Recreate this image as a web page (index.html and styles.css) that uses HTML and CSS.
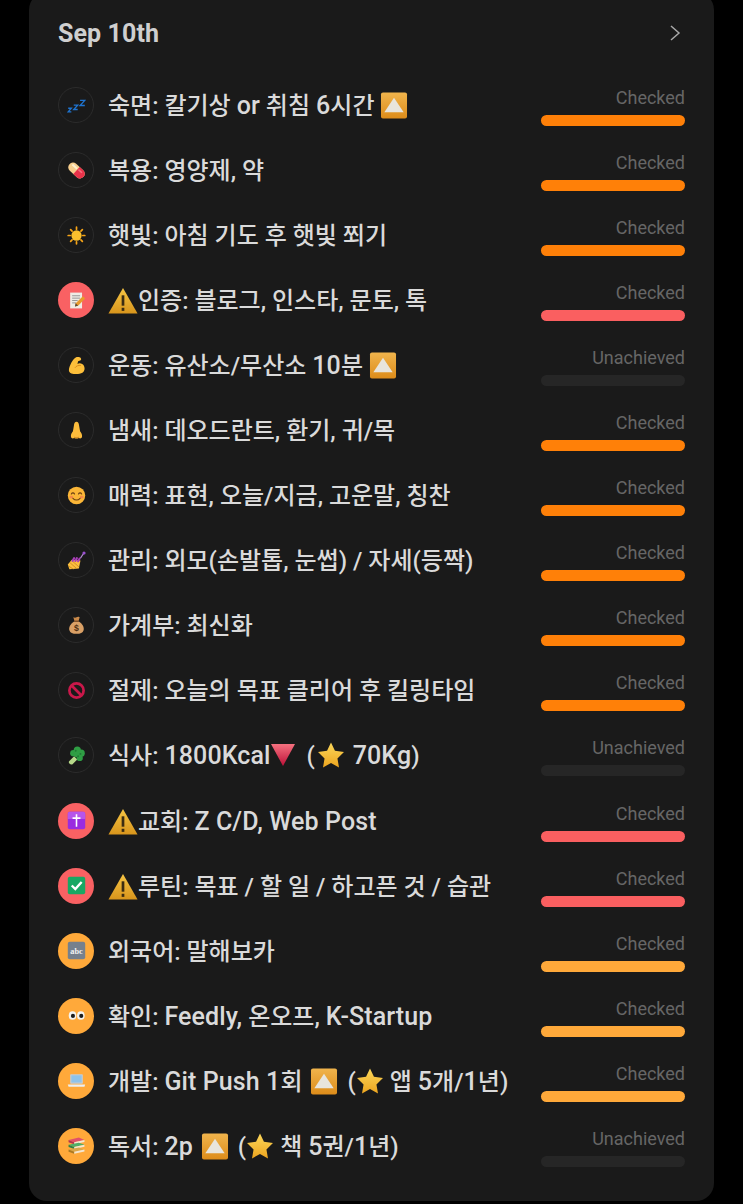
FILE: index.html
```html
<!DOCTYPE html>
<html lang="ko">
<head>
    <meta charset="UTF-8">
    <meta name="viewport" content="width=device-width, initial-scale=1.0">
    <title>Sep 10th</title>
    <link rel="stylesheet" href="styles.css">
</head>
<body>
    <!-- Emoji drawn as symbols, there is no emoji font -->
    <svg class="sprites" xmlns="http://www.w3.org/2000/svg">
        <defs>
            <linearGradient id="g-up" x1="0" y1="0" x2="0" y2="1"><stop offset="0" stop-color="#f0b44c"/><stop offset="1" stop-color="#dd8c1a"/></linearGradient>
            <linearGradient id="g-warn" x1="0" y1="0" x2="0" y2="1"><stop offset="0" stop-color="#f6c544"/><stop offset="1" stop-color="#d8951c"/></linearGradient>
            <linearGradient id="g-down" x1="0" y1="0" x2="0" y2="1"><stop offset="0" stop-color="#f5717f"/><stop offset="1" stop-color="#bd1038"/></linearGradient>
            <linearGradient id="g-star" x1="0" y1="0" x2="0" y2="1"><stop offset="0" stop-color="#fbd75a"/><stop offset="1" stop-color="#eda51f"/></linearGradient>
        </defs>
        <symbol id="e-zzz" viewBox="0 0 24 24"><g fill="none" stroke="#1f74d0" stroke-width="1.700"><path d="M1.500 15.500h4l-4 4.500h4"/><path d="M8.500 11.500h5l-5 5.500h5"/><path d="M16.500 5.500h6l-6 6.500h6"/></g></symbol>
        <symbol id="e-pill" viewBox="0 0 24 24"><g transform="rotate(42 12 12)"><rect x="0" y="6" width="24" height="12" rx="6" fill="#f7cf8e"/><path d="M12 6h6a6 6 0 0 1 0 12H12z" fill="#e8324a"/><path d="M3 8.500h8v2.500H3z" fill="#fff0cf"/><path d="M13 8.500h6v2h-6z" fill="#f4707f"/></g></symbol>
        <symbol id="e-sun" viewBox="0 0 24 24"><g stroke="#f7a417" stroke-width="2.200" stroke-linecap="round"><path d="M12 1.500v2.500M12 20v2.500M1.500 12H4M20 12h2.500M4.600 4.600l1.800 1.800M17.600 17.600l1.800 1.800M4.600 19.400l1.800-1.800M17.600 6.400l1.800-1.800"/></g><circle cx="12" cy="12" r="6.500" fill="#fbc02d"/></symbol>
        <symbol id="e-memo" viewBox="0 0 24 24"><path d="M4 2h15v20H4z" fill="#efece4"/><path d="M6.500 6h10M6.500 9h10M6.500 12h7M6.500 15h5" stroke="#8a8a8a" stroke-width="1.100"/><path d="M10 19.500l1-4 9-9 3 3-9 9z" fill="#e89a2c"/><path d="M10 19.500l1-4 3 3z" fill="#5b4a3a"/></symbol>
        <symbol id="e-muscle" viewBox="0 0 24 24"><path d="M11 2c2-1 5-.8 6.500.8.800 1 .3 2.600-1 3l-2.500.7-.8 3.500C16 8.500 20 9.500 21.500 12.500c1.500 3 .7 7-2 8.700-3.500 2-10 2-14 .8-2.500-.8-3.500-3-3-5.500C3.500 12 6.500 5 11 2z" fill="#fdbf3a"/><path d="M10 15c1.500-2.500 4.500-3.500 7.500-3" fill="none" stroke="#d98a1a" stroke-width="1.200"/></symbol>
        <symbol id="e-nose" viewBox="0 0 24 24"><path d="M12 1c-2 0-3 2-3.300 5L7.500 13C6 15 4.500 17 5 20c.4 2 2.500 2.500 4 1.500 1.500 1 4.500 1 6 0 1.500 1 3.600.5 4-1.500.5-3-1-5-2.500-7l-1.200-7C15 3 14 1 12 1z" fill="#fcbc3c"/><path d="M9 20.500c2 .8 4 .8 6 0" fill="none" stroke="#c77f1d" stroke-width="1.200"/></symbol>
        <symbol id="e-smile" viewBox="0 0 24 24"><circle cx="12" cy="12" r="11" fill="#fbb637"/><ellipse cx="5.500" cy="14" rx="2.500" ry="1.800" fill="#f58a4b"/><ellipse cx="18.500" cy="14" rx="2.500" ry="1.800" fill="#f58a4b"/><path d="M5.500 10c1-1.800 3-1.800 4 0M14.500 10c1-1.800 3-1.800 4 0M7.500 15.500c2.500 3 6.500 3 9 0" fill="none" stroke="#6b3f12" stroke-width="1.400" stroke-linecap="round"/></symbol>
        <symbol id="e-nail" viewBox="0 0 24 24"><path d="M1 17l5-6 11 1-2 10-12 1z" fill="#fcbf3f"/><path d="M4 15l8 7M7 13l8 7M2 19l6 4" stroke="#c9851f" stroke-width="1"/><path d="M7 12.500l2-3.500M10.500 12.500l2-3.500M14 13l2-3.500" stroke="#a93fb8" stroke-width="2.600" stroke-linecap="round"/><path d="M17 9l4-6" stroke="#b28bd0" stroke-width="1.400"/><circle cx="21.500" cy="2.500" r="2" fill="#9a4fd0"/></symbol>
        <symbol id="e-ban" viewBox="0 0 24 24"><circle cx="12" cy="12" r="9" fill="none" stroke="#c9184a" stroke-width="3.400"/><path d="M5.700 5.700l12.600 12.600" stroke="#c9184a" stroke-width="3.400"/></symbol>
        <symbol id="e-broccoli" viewBox="0 0 24 24"><path d="M3 22c-1-1-1-2 0-3l6-6 4 4-6 6c-1 .6-3 .4-4-1z" fill="#b7d98a"/><g fill="#2f9e44"><circle cx="13" cy="5" r="4.500"/><circle cx="18" cy="9" r="4.500"/><circle cx="8" cy="9" r="4"/><circle cx="16" cy="15" r="4"/><circle cx="12" cy="10" r="4"/></g><g fill="#1f7a33"><circle cx="11" cy="6" r="1.200"/><circle cx="17" cy="10" r="1.200"/><circle cx="14" cy="13" r="1.200"/></g></symbol>
        <symbol id="e-cross" viewBox="0 0 24 24"><rect x="1" y="1" width="22" height="22" rx="2.500" fill="#9a2be0"/><path d="M1 3.500a2.500 2.500 0 0 1 2.500-2.500h17a2.500 2.500 0 0 1 2.500 2.500V10H1z" fill="#b655ea"/><path d="M12 4v16M7 9h10" stroke="#fff" stroke-width="2"/></symbol>
        <symbol id="e-check" viewBox="0 0 24 24"><rect x="1" y="1" width="22" height="22" rx="2.500" fill="#18a863"/><path d="M6 12l4.500 4.500L18.500 7.500" fill="none" stroke="#fff" stroke-width="3"/></symbol>
        <symbol id="e-eyes" viewBox="0 0 24 24"><ellipse cx="7" cy="12" rx="4.800" ry="5.500" fill="#f5f3ee"/><ellipse cx="17.500" cy="12" rx="4.800" ry="5.500" fill="#f5f3ee"/><circle cx="7.500" cy="12.500" r="2.600" fill="#1d1d1d"/><circle cx="18" cy="12.500" r="2.600" fill="#1d1d1d"/></symbol>
        <symbol id="e-laptop" viewBox="0 0 24 24"><rect x="4" y="4" width="16" height="12" rx="1" fill="#c4ccd4"/><rect x="5.500" y="5.500" width="13" height="9" fill="#8fc3ea"/><path d="M1 17h22l-1 3H2z" fill="#eceff1"/></symbol>
        <symbol id="e-books" viewBox="0 0 24 24"><path d="M2 5l13-3 7 3-13 3z" fill="#e2506a"/><path d="M9 8l13-3v2.500L9 10.500z" fill="#f3e6d0"/><path d="M2 5v3l7 2.500V8z" fill="#b3324e"/><path d="M2 11l13-2.500 7 2.500-13 3z" fill="#4fae6a"/><path d="M9 14l13-3v2.500L9 16.500z" fill="#f3e6d0"/><path d="M2 11v3l7 2.500V14z" fill="#2f7f48"/><path d="M2 17l13-2.500 7 2.500-13 3z" fill="#d8a64a"/><path d="M9 20l13-3v2.500L9 22.500z" fill="#f3e6d0"/><path d="M2 17v3l7 2.500V20z" fill="#a97a24"/></symbol>
        <symbol id="e-up" viewBox="0 0 28 28"><rect x="0.500" y="0.500" width="27" height="27" rx="2" fill="url(#g-up)"/><path d="M14 6l10 15H4z" fill="#e8e5dd"/></symbol>
        <symbol id="e-warn" viewBox="0 0 28 26"><path d="M14 1L28 25.500H0z" fill="url(#g-warn)"/><path d="M14 8v10" stroke="#3b2c12" stroke-width="2.600"/><path d="M14 20v3" stroke="#3b2c12" stroke-width="2.600"/></symbol>
        <symbol id="e-down" viewBox="0 0 26 24"><path d="M1 1h24L13 23z" fill="url(#g-down)"/></symbol>
        <symbol id="e-star" viewBox="0 0 26 26"><path d="M13 .5l3.800 8 8.700 1.200-6.300 6.100 1.500 8.700L13 20.300 5.300 24.500l1.500-8.700L.5 9.700l8.700-1.200z" fill="url(#g-star)"/></symbol>
    </svg>

    <div class="card">
        <div class="card-head">
            <span class="date">Sep 10th</span>
            <svg class="chevron" viewBox="0 0 12 16"><path d="M2 1l8 7-8 7" fill="none" stroke="#a8a8a8" stroke-width="1.500"/></svg>
        </div>

        <div class="row">
            <div class="icon"><svg class="emo"><use href="#e-zzz"/></svg></div>
            <div class="title">숙면: 칼기상 <span class="lat">or</span> 취침 <span class="lat">6</span>시간 <svg class="tag"><use href="#e-up"/></svg></div>
            <div class="status"><span class="label">Checked</span><div class="bar bar-orange"></div></div>
        </div>
        <div class="row">
            <div class="icon"><svg class="emo"><use href="#e-pill"/></svg></div>
            <div class="title">복용: 영양제, 약</div>
            <div class="status"><span class="label">Checked</span><div class="bar bar-orange"></div></div>
        </div>
        <div class="row">
            <div class="icon"><svg class="emo"><use href="#e-sun"/></svg></div>
            <div class="title">햇빛: 아침 기도 후 햇빛 쬐기</div>
            <div class="status"><span class="label">Checked</span><div class="bar bar-orange"></div></div>
        </div>
        <div class="row">
            <div class="icon icon-red"><svg class="emo"><use href="#e-memo"/></svg></div>
            <div class="title"><svg class="tag tag-warn"><use href="#e-warn"/></svg>인증: 블로그, 인스타, 문토, 톡</div>
            <div class="status"><span class="label">Checked</span><div class="bar bar-red"></div></div>
        </div>
        <div class="row">
            <div class="icon"><svg class="emo"><use href="#e-muscle"/></svg></div>
            <div class="title">운동: 유산소/무산소 <span class="lat">10</span>분 <svg class="tag"><use href="#e-up"/></svg></div>
            <div class="status"><span class="label">Unachieved</span><div class="bar"></div></div>
        </div>
        <div class="row">
            <div class="icon"><svg class="emo"><use href="#e-nose"/></svg></div>
            <div class="title">냄새: 데오드란트, 환기, 귀/목</div>
            <div class="status"><span class="label">Checked</span><div class="bar bar-orange"></div></div>
        </div>
        <div class="row">
            <div class="icon"><svg class="emo"><use href="#e-smile"/></svg></div>
            <div class="title">매력: 표현, 오늘/지금, 고운말, 칭찬</div>
            <div class="status"><span class="label">Checked</span><div class="bar bar-orange"></div></div>
        </div>
        <div class="row">
            <div class="icon"><svg class="emo"><use href="#e-nail"/></svg></div>
            <div class="title">관리: 외모(손발톱, 눈썹) / 자세(등짝)</div>
            <div class="status"><span class="label">Checked</span><div class="bar bar-orange"></div></div>
        </div>
        <div class="row">
            <div class="icon">
                <svg class="emo" viewBox="0 0 24 24"><path d="M8 1.500c2 1 3 .5 4 0s2-1 4 0l-1.500 5h-5z" fill="#c8894a"/><path d="M9 7c-5 3-7 8-6 11 1 3.500 4 4.500 9 4.500s8-1 9-4.500c1-3-1-8-6-11z" fill="#d9a066"/><path d="M9 6.500h6" stroke="#7a4a22" stroke-width="1.500"/><text x="12" y="19.500" text-anchor="middle" font-family="Liberation Sans, sans-serif" font-size="11" font-weight="700" fill="#4f2f12">$</text></svg>
            </div>
            <div class="title">가계부: 최신화</div>
            <div class="status"><span class="label">Checked</span><div class="bar bar-orange"></div></div>
        </div>
        <div class="row">
            <div class="icon"><svg class="emo"><use href="#e-ban"/></svg></div>
            <div class="title">절제: 오늘의 목표 클리어 후 킬링타임</div>
            <div class="status"><span class="label">Checked</span><div class="bar bar-orange"></div></div>
        </div>
        <div class="row">
            <div class="icon"><svg class="emo"><use href="#e-broccoli"/></svg></div>
            <div class="title">식사: <span class="lat">1800Kcal</span><svg class="tag tag-down"><use href="#e-down"/></svg> (<svg class="tag tag-star tag-star-wide"><use href="#e-star"/></svg> <span class="lat">70Kg</span>)</div>
            <div class="status"><span class="label">Unachieved</span><div class="bar"></div></div>
        </div>
        <div class="row">
            <div class="icon icon-red"><svg class="emo"><use href="#e-cross"/></svg></div>
            <div class="title"><svg class="tag tag-warn"><use href="#e-warn"/></svg>교회: <span class="lat">Z C/D, Web Post</span></div>
            <div class="status"><span class="label">Checked</span><div class="bar bar-red"></div></div>
        </div>
        <div class="row">
            <div class="icon icon-red"><svg class="emo"><use href="#e-check"/></svg></div>
            <div class="title"><svg class="tag tag-warn"><use href="#e-warn"/></svg>루틴: 목표 / 할 일 / 하고픈 것 / 습관</div>
            <div class="status"><span class="label">Checked</span><div class="bar bar-red"></div></div>
        </div>
        <div class="row">
            <div class="icon icon-amber">
                <svg class="emo" viewBox="0 0 24 24"><rect x="1" y="1" width="22" height="22" rx="2.500" fill="#76808d"/><text x="12" y="16" text-anchor="middle" font-family="Liberation Serif, serif" font-size="10.500" font-weight="700" fill="#f2f2f2">abc</text></svg>
            </div>
            <div class="title">외국어: 말해보카</div>
            <div class="status"><span class="label">Checked</span><div class="bar bar-amber"></div></div>
        </div>
        <div class="row">
            <div class="icon icon-amber"><svg class="emo"><use href="#e-eyes"/></svg></div>
            <div class="title">확인: <span class="lat">Feedly,</span> 온오프, <span class="lat">K-Startup</span></div>
            <div class="status"><span class="label">Checked</span><div class="bar bar-amber"></div></div>
        </div>
        <div class="row">
            <div class="icon icon-amber"><svg class="emo"><use href="#e-laptop"/></svg></div>
            <div class="title">개발: <span class="lat">Git Push 1</span>회 <svg class="tag tag-up-gap"><use href="#e-up"/></svg> (<svg class="tag tag-star"><use href="#e-star"/></svg> 앱 <span class="lat">5</span>개/<span class="lat">1</span>년)</div>
            <div class="status"><span class="label">Checked</span><div class="bar bar-amber"></div></div>
        </div>
        <div class="row">
            <div class="icon icon-amber"><svg class="emo"><use href="#e-books"/></svg></div>
            <div class="title">독서: <span class="lat">2p</span> <svg class="tag tag-up-gap"><use href="#e-up"/></svg> (<svg class="tag tag-star"><use href="#e-star"/></svg> 책 <span class="lat">5</span>권/<span class="lat">1</span>년)</div>
            <div class="status"><span class="label">Unachieved</span><div class="bar"></div></div>
        </div>
    </div>
</body>
</html>
```

FILE: styles.css
```css
html, body {
    margin: 0;
    height: 1204px;
    overflow: hidden;
    background: #000;
}
body {
    font-family: Roboto, "Noto Sans CJK KR", sans-serif;
    padding: 0 29px;
    box-sizing: border-box;
}
.sprites {
    display: block;
    width: 0;
    height: 0;
}
.card {
    background: #1a1a1a;
    border-radius: 18px;
    margin-top: -8px;
    padding: 0 29px 23px;
}
.card-head {
    display: flex;
    align-items: center;
    justify-content: space-between;
    height: 80.5px;
    padding-top: 2px;
    box-sizing: border-box;
}
.date {
    font-size: 25px;
    font-weight: 700;
    letter-spacing: .1px;
    color: #cfcfcf;
}
.chevron {
    width: 12px;
    height: 16px;
    margin-right: 4px;
}
.row {
    display: flex;
    align-items: center;
    height: 65.06px;
}
.icon {
    display: flex;
    align-items: center;
    justify-content: center;
    flex: none;
    width: 36px;
    height: 36px;
    box-sizing: border-box;
    border: 1px solid #2b2b2b;
    border-radius: 50%;
    margin-right: 14px;
}
.icon-red {
    background: #f96163;
    border: none;
}
.icon-amber {
    background: #ffa93a;
    border: none;
}
.emo {
    width: 19px;
    height: 19px;
}
.title {
    flex: 1;
    font-size: 24px;
    font-weight: 500;
    color: #dadada;
    white-space: nowrap;
    padding-bottom: 3px;
}
.lat {
    font-size: 25px;
    letter-spacing: .1px;
}
.tag {
    width: 28px;
    height: 27px;
    vertical-align: -5px;
}
.tag-warn {
    width: 30px;
    height: 27px;
}
.tag-up-gap {
    margin: 0 3px 0 2px;
}
.tag-down {
    width: 26px;
    height: 24px;
    vertical-align: -3px;
    margin-right: 4px;
}
.tag-star {
    width: 28px;
    height: 27px;
}
.tag-star-wide {
    margin: 0 2px;
}
.status {
    display: flex;
    flex-direction: column;
    align-items: flex-end;
    flex: none;
    width: 144px;
    margin-top: 4px;
}
.label {
    font-size: 18px;
    line-height: 20px;
    color: #666;
    margin-bottom: 7px;
}
.bar {
    width: 100%;
    height: 11px;
    border-radius: 6px;
    background: #262626;
}
.bar-orange {
    background: #ff8008;
}
.bar-red {
    background: #fa5f60;
}
.bar-amber {
    background: #ffa93a;
}
```
